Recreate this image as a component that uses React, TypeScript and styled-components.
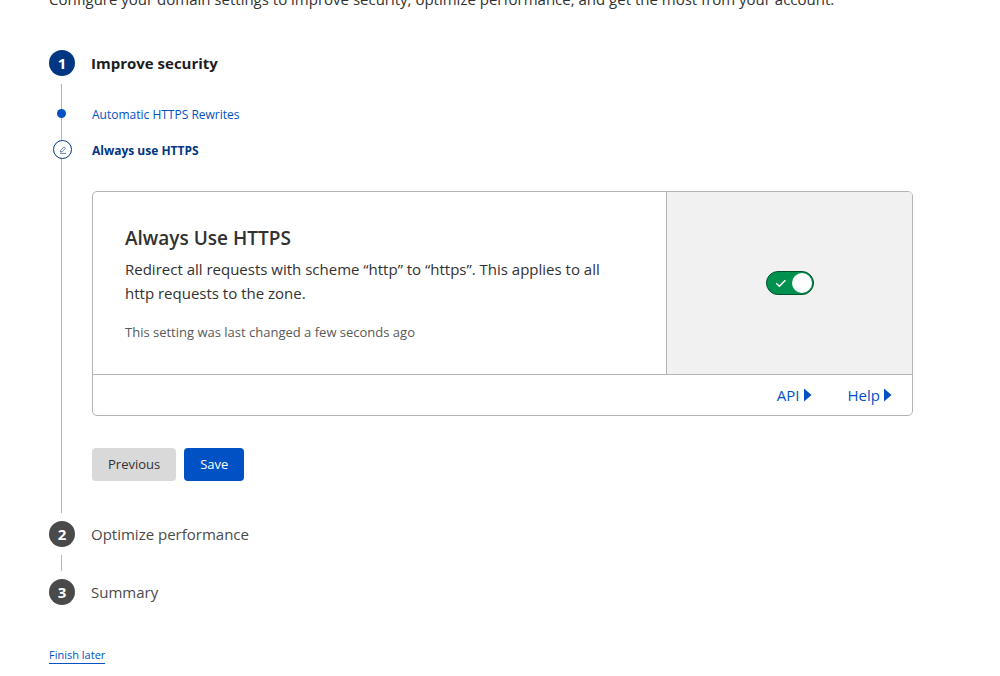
import React, { useState } from "react";
import styled, { createGlobalStyle, css } from "styled-components";

const colors = {
  text: "#313131",
  muted: "#595959",
  step: "#4a4a4a",
  line: "#b3b3b3",
  navy: "#003682",
  blue: "#0051c3",
  green: "#00914f",
};

const GlobalStyle = createGlobalStyle`
  *, *::before, *::after { box-sizing: border-box; }
  body {
    margin: 0;
    background: #fff;
    color: ${colors.text};
    font-family: "Segoe UI", "Open Sans", "Noto Sans", sans-serif;
    font-size: 15px;
    line-height: 24px;
  }
  h1, h2, h3, p, ol, ul { margin: 0; padding: 0; }
  ol, ul { list-style: none; }
`;

const Page = styled.main`
  padding: 0 87px 12px 49px;
`;

const Intro = styled.header`
  display: flex;
  align-items: flex-end;
  height: 11px;
  margin-bottom: 39px;
`;

const StepHeader = styled.div`
  display: flex;
  align-items: center;
  gap: 16px;
  height: 26px;
`;

const StepNumber = styled.span<{ $active?: boolean }>`
  flex: none;
  width: 26px;
  height: 26px;
  border-radius: 50%;
  background: ${(p) => (p.$active ? colors.navy : colors.step)};
  color: #fff;
  font-size: 15px;
  font-weight: 700;
  line-height: 26px;
  text-align: center;
`;

const StepTitle = styled.h2<{ $active?: boolean }>`
  color: ${(p) => (p.$active ? "#1d1d1d" : colors.step)};
  font-size: 15px;
  font-weight: ${(p) => (p.$active ? 700 : 400)};
`;

const StepBody = styled.div`
  min-height: 16px;
  margin: 8px 0 8px 12px;
  border-left: 1px solid ${colors.line};
`;

const ActiveBody = styled(StepBody)`
  padding: 21px 0 32px 30px;
`;

const SubSteps = styled.ul`
  display: flex;
  flex-direction: column;
  gap: 16px;
  margin-bottom: 30px;
`;

const SubStep = styled.li<{ $current?: boolean }>`
  position: relative;
  height: 20px;
  color: ${(p) => (p.$current ? colors.navy : colors.blue)};
  font-size: 12px;
  font-weight: ${(p) => (p.$current ? 700 : 400)};
  line-height: 20px;
`;

const SubLink = styled.a`
  color: inherit;
  text-decoration: none;
`;

const Dot = styled.span`
  position: absolute;
  top: 4px;
  left: -35px;
  width: 9px;
  height: 9px;
  border-radius: 50%;
  background: ${colors.blue};
`;

const EditMark = styled.span`
  position: absolute;
  top: -1px;
  left: -39px;
  display: flex;
  align-items: center;
  justify-content: center;
  width: 19px;
  height: 19px;
  border: 1px solid ${colors.navy};
  border-radius: 50%;
  background: #fff;
`;

const Card = styled.section`
  border: 1px solid ${colors.line};
  border-radius: 5px;
  overflow: hidden;
`;

const CardMain = styled.div`
  display: grid;
  grid-template-columns: 7fr 3fr;
`;

const CardText = styled.div`
  padding: 32px;
`;

const CardTitle = styled.h3`
  margin-bottom: 5px;
  font-size: 19px;
  font-weight: 600;
  line-height: 28px;
`;

const Description = styled.p`
  max-width: 500px;
`;

const Meta = styled.p`
  margin-top: 17px;
  color: ${colors.muted};
  font-size: 13px;
  line-height: 20px;
`;

const CardControl = styled.div`
  display: flex;
  align-items: center;
  justify-content: center;
  border-left: 1px solid ${colors.line};
  background: #f1f1f1;
`;

const Toggle = styled.label`
  position: relative;
  display: block;
  width: 48px;
  height: 24px;
  cursor: pointer;
`;

const ToggleInput = styled.input`
  appearance: none;
  display: block;
  width: 48px;
  height: 24px;
  margin: 0;
  border: 1px solid #595959;
  border-radius: 12px;
  background: #797979;
  cursor: pointer;

  &::before {
    content: "";
    display: block;
    width: 20px;
    height: 20px;
    margin: 1px;
    border-radius: 50%;
    background: #fff;
  }

  &:checked {
    border-color: #00502b;
    background: ${colors.green};
  }

  &:checked::before {
    margin-left: 25px;
  }
`;

const ToggleCheck = styled.svg`
  position: absolute;
  top: 8px;
  left: 9px;
  pointer-events: none;
`;

const CardFooter = styled.div`
  display: flex;
  justify-content: flex-end;
  gap: 36px;
  padding: 8px 20px;
  border-top: 1px solid ${colors.line};
`;

const FooterLink = styled.a`
  display: flex;
  align-items: center;
  gap: 4px;
  color: ${colors.blue};
  text-decoration: none;
`;

const Actions = styled.div`
  display: flex;
  gap: 8px;
  margin-top: 32px;
`;

const Button = styled.button<{ $primary?: boolean }>`
  height: 33px;
  padding: 0 16px 2px;
  border: 0;
  border-radius: 4px;
  background: #d9d9d9;
  color: ${colors.text};
  font-family: inherit;
  font-size: 13px;
  cursor: pointer;
  ${(p) =>
    p.$primary &&
    css`
      background: ${colors.blue};
      color: #fff;
    `}
`;

const FinishLink = styled.a`
  display: inline-block;
  margin-top: 42px;
  border-bottom: 1px solid ${colors.blue};
  color: ${colors.blue};
  font-size: 11px;
  line-height: 16px;
  text-decoration: none;
`;

const Caret = () => (
  <svg width="8" height="14" viewBox="0 0 8 14" aria-hidden="true">
    <path d="M0 0.5L7.5 7L0 13.5Z" fill={colors.blue} />
  </svg>
);

const Pencil = () => (
  <svg width="8" height="8" viewBox="0 0 8 8" fill="none" stroke={colors.navy} strokeWidth="0.6" aria-hidden="true">
    <path d="M1.3 6L1.7 4.2L5 0.9L6.5 2.3L3.2 5.6Z" />
    <path d="M1 7.4H7" />
  </svg>
);

export default function App() {
  const [enabled, setEnabled] = useState(true);

  return (
    <>
      <GlobalStyle />
      <Page>
        <Intro>
          <p>
            Configure your domain settings to improve security, optimize performance, and get the most from your
            account.
          </p>
        </Intro>
        <ol>
          <li>
            <StepHeader>
              <StepNumber $active>1</StepNumber>
              <StepTitle $active>Improve security</StepTitle>
            </StepHeader>
            <ActiveBody>
              <SubSteps>
                <SubStep>
                  <Dot />
                  <SubLink href="#rewrites">Automatic HTTPS Rewrites</SubLink>
                </SubStep>
                <SubStep $current>
                  <EditMark>
                    <Pencil />
                  </EditMark>
                  Always use HTTPS
                </SubStep>
              </SubSteps>
              <Card>
                <CardMain>
                  <CardText>
                    <CardTitle id="always-https">Always Use HTTPS</CardTitle>
                    <Description>
                      Redirect all requests with scheme “http” to “https”. This applies to all http requests to the
                      zone.
                    </Description>
                    <Meta>This setting was last changed a few seconds ago</Meta>
                  </CardText>
                  <CardControl>
                    <Toggle>
                      <ToggleInput
                        type="checkbox"
                        aria-labelledby="always-https"
                        checked={enabled}
                        onChange={(e) => setEnabled(e.target.checked)}
                      />
                      {enabled && (
                        <ToggleCheck width="12" height="9" viewBox="0 0 12 9" fill="none" aria-hidden="true">
                          <path d="M1.2 4.2L4.4 7.2L10.4 1.2" stroke="#fff" strokeWidth="1.5" />
                        </ToggleCheck>
                      )}
                    </Toggle>
                  </CardControl>
                </CardMain>
                <CardFooter>
                  <FooterLink href="#api">
                    API
                    <Caret />
                  </FooterLink>
                  <FooterLink href="#help">
                    Help
                    <Caret />
                  </FooterLink>
                </CardFooter>
              </Card>
              <Actions>
                <Button type="button">Previous</Button>
                <Button type="button" $primary>
                  Save
                </Button>
              </Actions>
            </ActiveBody>
          </li>
          <li>
            <StepHeader>
              <StepNumber>2</StepNumber>
              <StepTitle>Optimize performance</StepTitle>
            </StepHeader>
            <StepBody />
          </li>
          <li>
            <StepHeader>
              <StepNumber>3</StepNumber>
              <StepTitle>Summary</StepTitle>
            </StepHeader>
          </li>
        </ol>
        <FinishLink href="#later">Finish later</FinishLink>
      </Page>
    </>
  );
}
